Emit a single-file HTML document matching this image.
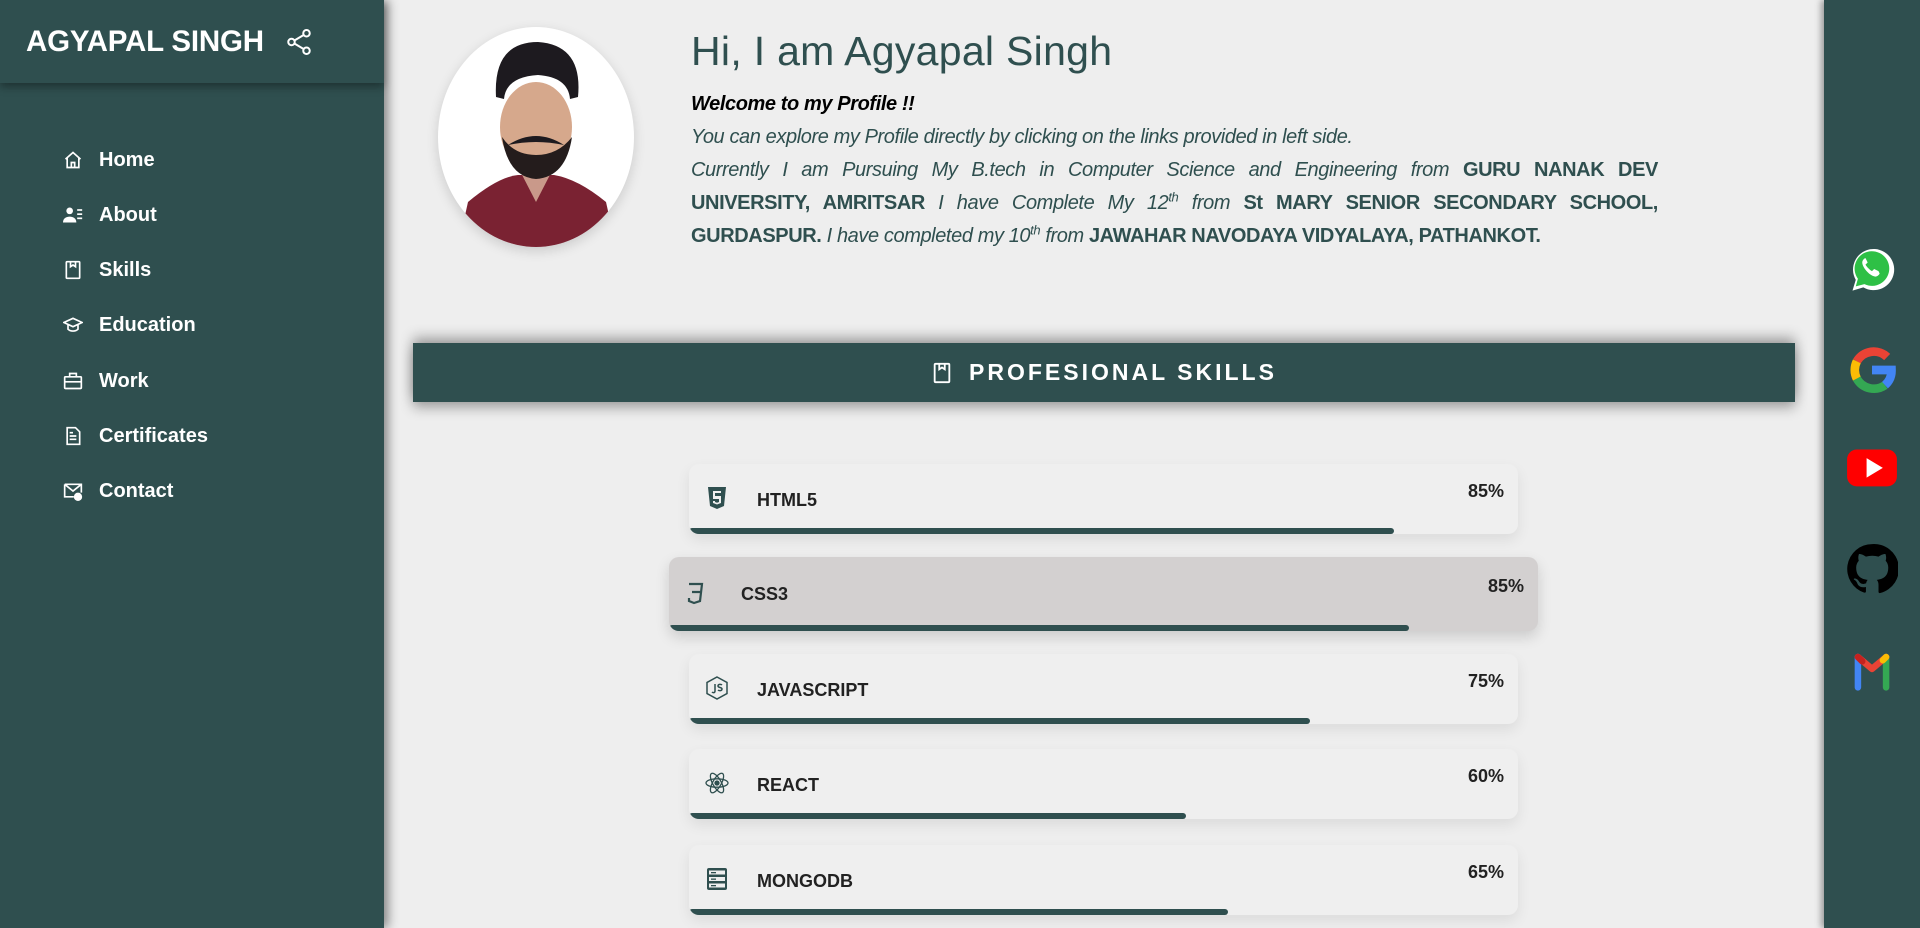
<!DOCTYPE html>
<html><head><meta charset="utf-8"><style>
*{margin:0;padding:0;box-sizing:border-box}
body{width:1920px;height:928px;overflow:hidden;background:#eeeeee;font-family:"Liberation Sans",sans-serif;position:relative}
.side{position:absolute;left:0;top:0;width:384px;height:928px;background:#2f4f4f;box-shadow:4px 0 10px rgba(0,0,0,.45);z-index:3}
.hdr{height:83px;background:#2f4f4f;box-shadow:0 4px 8px rgba(0,0,0,.35);display:flex;align-items:center;padding-left:26px;color:#fff;font-weight:bold;font-size:29.5px;letter-spacing:-0.2px}
.hdr svg{margin-left:20px}
.nav{position:absolute;left:63px;top:0}
.nav div{position:absolute;left:0;color:#fff;font-weight:bold;font-size:20px;white-space:nowrap;display:flex;align-items:center;height:30px}
.nav svg{width:20px;height:20px;margin-right:16px}
.right{position:absolute;left:1824px;top:0;width:96px;height:928px;background:#2f4f4f;box-shadow:-3px 0 6px rgba(0,0,0,.35)}
.right svg{position:absolute;left:22px;width:52px;height:52px}
.photo{position:absolute;left:438px;top:27px;width:196px;height:220px;border-radius:50%;background:#fff;box-shadow:0 4px 12px rgba(0,0,0,.15);overflow:hidden}
h1{position:absolute;left:691px;top:28px;font-weight:normal;font-size:41px;color:#2f4f4f;letter-spacing:0.3px}
.txt{position:absolute;left:691px;top:88px;width:967px;font-style:italic;font-size:20px;line-height:33px;color:#2f4f4f;text-align:justify;letter-spacing:-0.4px}
.txt b{font-style:normal}
.txt sup{font-size:13px;line-height:0}
.banner{position:absolute;left:413px;top:343px;width:1382px;height:59px;background:#2f4f4f;box-shadow:0 -6px 12px rgba(0,0,0,.3),0 6px 12px rgba(0,0,0,.3);color:#fff;font-size:23px;letter-spacing:3px;display:flex;align-items:center;justify-content:center;font-weight:bold}
.banner svg{margin-right:16px}
.card{position:absolute;left:689px;width:829px;height:70px;background:#efefef;border-radius:10px;box-shadow:0 6px 14px rgba(0,0,0,.08);overflow:hidden}
.card .ic{position:absolute;left:16px;top:22px;width:24px;height:24px}
.card .nm{position:absolute;left:68px;top:26px;font-weight:bold;font-size:18px;color:#222}
.card .pc{position:absolute;right:14px;top:17px;font-weight:bold;font-size:18px;color:#222}
.card .bar{position:absolute;left:0;bottom:0;height:6px;background:#2f4f4f;border-radius:3px}
.card.h{left:669px;width:869px;height:74px;background:#d3d0d0;box-shadow:0 6px 14px rgba(0,0,0,.15)}
</style></head><body>
<div class="side">
 <div class="hdr">AGYAPAL SINGH
  <svg width="30" height="30" viewBox="0 0 24 24" fill="none" stroke="#fff" stroke-width="1.6"><circle cx="18" cy="5" r="2.6"/><circle cx="6" cy="12" r="2.6"/><circle cx="18" cy="19" r="2.6"/><path d="M8.3 10.8l7.4-4.4M8.3 13.2l7.4 4.4"/></svg>
 </div>
 <div class="nav">
  <div style="top:145px"><svg viewBox="0 0 24 24" fill="none" stroke="#fff" stroke-width="2"><path d="M3 11l9-8 9 8M5 9v12h14V9M10 21v-6h4v6"/></svg>Home</div>
  <div style="top:200px"><svg viewBox="0 0 24 24" fill="#fff"><circle cx="8" cy="7" r="4"/><path d="M0 21c0-5 4-7 8-7s8 2 8 7z"/><rect x="17" y="5" width="6" height="2"/><rect x="17" y="10" width="6" height="2"/><rect x="17" y="15" width="6" height="2"/></svg>About</div>
  <div style="top:255px"><svg viewBox="0 0 24 24" fill="none" stroke="#fff" stroke-width="2"><rect x="4" y="2" width="16" height="20" rx="1"/><path d="M9 2v6l3-2 3 2V2"/></svg>Skills</div>
  <div style="top:310px"><svg viewBox="0 0 24 24" fill="none" stroke="#fff" stroke-width="2"><path d="M1 9l11-5 11 5-11 5zM6 11v6c3 3 9 3 12 0v-6"/></svg>Education</div>
  <div style="top:366px"><svg viewBox="0 0 24 24" fill="none" stroke="#fff" stroke-width="2"><rect x="2" y="7" width="20" height="14" rx="1"/><path d="M8 7V3h8v4M2 13h20"/></svg>Work</div>
  <div style="top:421px"><svg viewBox="0 0 24 24" fill="none" stroke="#fff" stroke-width="2"><path d="M5 2h10l5 5v15H5zM8 12h8M8 16h8M8 8h4"/></svg>Certificates</div>
  <div style="top:476px"><svg viewBox="0 0 24 24" fill="none" stroke="#fff" stroke-width="2"><path d="M2 4h20v10M2 4v15h11M2 4l10 8 10-8"/><circle cx="18" cy="19" r="4" fill="#fff"/></svg>Contact</div>
 </div>
</div>

<div class="photo"><svg width="196" height="220" viewBox="0 0 196 220">
 <path d="M20 220 L30 175 Q60 150 80 148 L116 148 Q140 152 168 175 L178 220Z" fill="#7a2232"/>
 <path d="M80 140 L98 175 L116 140Z" fill="#c9998a"/>
 <ellipse cx="98" cy="100" rx="36" ry="45" fill="#d6a88c"/>
 <path d="M58 70 Q55 15 100 15 Q145 18 140 70 L132 72 Q130 50 100 48 Q68 50 66 72Z" fill="#1d1a1f"/>
 <path d="M64 110 Q70 150 98 152 Q128 150 134 110 Q120 128 98 128 Q76 128 64 110Z" fill="#241c1c"/>
 <path d="M70 118 Q98 100 126 118 Q98 112 70 118Z" fill="#1d1a1f"/>
</svg></div>

<h1>Hi, I am Agyapal Singh</h1>
<div class="txt"><b style="font-style:italic;color:#000">Welcome to my Profile !!</b><br>You can explore my Profile directly by clicking on the links provided in left side.<br>Currently I am Pursuing My B.tech in Computer Science and Engineering from <b>GURU NANAK DEV UNIVERSITY, AMRITSAR</b> I have Complete My 12<sup>th</sup> from <b>St MARY SENIOR SECONDARY SCHOOL, GURDASPUR.</b> I have completed my 10<sup>th</sup> from <b>JAWAHAR NAVODAYA VIDYALAYA, PATHANKOT.</b></div>

<div class="banner"><svg width="22" height="22" viewBox="0 0 24 24" fill="none" stroke="#fff" stroke-width="2"><rect x="4" y="2" width="16" height="20" rx="1"/><path d="M9 2v6l3-2 3 2V2"/></svg>PROFESIONAL SKILLS</div>

<div class="card" style="top:464px"><svg class="ic" viewBox="0 0 24 24"><path d="M3 1h18l-2 19-7 3-7-3z" fill="#2f4f4f"/><path d="M8 5h8v2h-6v3h6v7l-4 1.5-4-1.5v-2h2v1l2 .7 2-.7v-3H8z" fill="#efefef"/></svg><div class="nm">HTML5</div><div class="pc">85%</div><div class="bar" style="width:705px"></div></div>
<div class="card h" style="top:557px"><svg class="ic" style="left:14px;top:24px" viewBox="0 0 24 24" fill="none" stroke="#2f4f4f" stroke-width="2.2"><path d="M6 3h13l-2 17-6 2-5-2v-3M9 11h8"/></svg><div class="nm" style="left:72px;top:27px">CSS3</div><div class="pc" style="top:19px">85%</div><div class="bar" style="width:740px"></div></div>
<div class="card" style="top:654px"><svg class="ic" viewBox="0 0 24 24" fill="none" stroke="#2f4f4f" stroke-width="1.5"><path d="M12 1l10 5.5v11L12 23 2 17.5v-11z"/><path d="M10 8v7c0 2-2 2-3 1M17 9c-1-1-4-1-4 1s4 1 4 3-3 2-4 1"/></svg><div class="nm">JAVASCRIPT</div><div class="pc">75%</div><div class="bar" style="width:621px"></div></div>
<div class="card" style="top:749px"><svg class="ic" viewBox="0 0 24 24" fill="none" stroke="#2f4f4f" stroke-width="1.3"><ellipse cx="12" cy="12" rx="11" ry="4.2"/><ellipse cx="12" cy="12" rx="11" ry="4.2" transform="rotate(60 12 12)"/><ellipse cx="12" cy="12" rx="11" ry="4.2" transform="rotate(120 12 12)"/><circle cx="12" cy="12" r="2" fill="#2f4f4f"/></svg><div class="nm">REACT</div><div class="pc">60%</div><div class="bar" style="width:497px"></div></div>
<div class="card" style="top:845px"><svg class="ic" viewBox="0 0 24 24"><rect x="2" y="1" width="20" height="22" rx="2" fill="#2f4f4f"/><g fill="#efefef"><rect x="4" y="3.5" width="16" height="4"/><rect x="4" y="10" width="16" height="4"/><rect x="4" y="16.5" width="16" height="4"/></g><g fill="#2f4f4f"><rect x="6" y="5" width="5" height="1.3"/><rect x="6" y="11.5" width="5" height="1.3"/><rect x="6" y="18" width="5" height="1.3"/></g></svg><div class="nm">MONGODB</div><div class="pc">65%</div><div class="bar" style="width:539px"></div></div>

<div class="right">
 <svg style="top:243px" viewBox="0 0 48 48"><path d="M6 44l3-10A19 19 0 1 1 16 41z" fill="#fff"/><path d="M9 40l2-7A16 16 0 1 1 17 38z" fill="#2ec046"/><path d="M18 14c-1 0-3 2-3 4 0 4 6 12 12 13 2 0 4-2 4-3l-1-2-4-2-2 2c-2-1-5-4-6-6l2-2-2-4z" fill="#fff"/></svg>
 <svg style="top:344px" viewBox="0 0 48 48" fill="none" stroke-width="8"><path d="M38 12A18 18 0 0 0 10 16" stroke="#ea4335"/><path d="M10 16A18 18 0 0 0 10 32" stroke="#fbbc05"/><path d="M10 32A18 18 0 0 0 36 38" stroke="#34a853"/><path d="M36 38A18 18 0 0 0 42 24H24" stroke="#4285f4"/></svg>
 <svg style="top:443px" viewBox="0 0 48 48"><rect x="1" y="6" width="46" height="34" rx="9" fill="#f00"/><path d="M19 14v18l15-9z" fill="#fff"/></svg>
 <svg style="top:543px" viewBox="0 0 24 24"><path fill="#000" d="M12 .5a11.5 11.5 0 0 0-3.6 22.4c.6.1.8-.3.8-.6v-2c-3.2.7-3.900-1.5-3.9-1.5-.5-1.3-1.300-1.7-1.3-1.7-1-.7.1-.7.1-.7 1.2.1 1.8 1.2 1.8 1.2 1 1.8 2.7 1.3 3.4 1 .1-.8.4-1.3.7-1.6-2.6-.3-5.3-1.3-5.3-5.7 0-1.3.5-2.3 1.2-3.1-.1-.3-.5-1.5.1-3.1 0 0 1-.3 3.2 1.2a11 11 0 0 1 5.8 0c2.2-1.5 3.2-1.2 3.2-1.2.6 1.6.2 2.8.1 3.1.7.8 1.2 1.8 1.2 3.1 0 4.4-2.7 5.4-5.3 5.7.4.4.8 1.1.8 2.2v3.3c0 .3.2.7.8.6A11.5 11.5 0 0 0 12 .5z"/></svg>
 <svg style="top:644px" viewBox="0 0 48 48" fill="none" stroke-width="6" stroke-linecap="round" stroke-linejoin="round"><path d="M11 40V12" stroke="#4285f4"/><path d="M37 40V12" stroke="#34a853"/><path d="M11 12l13 11 13-11" stroke="#ea4335"/><path d="M11 12l4 4" stroke="#c5221f"/><path d="M37 12l-3 3" stroke="#fbbc04"/></svg>
</div>
</body></html>
